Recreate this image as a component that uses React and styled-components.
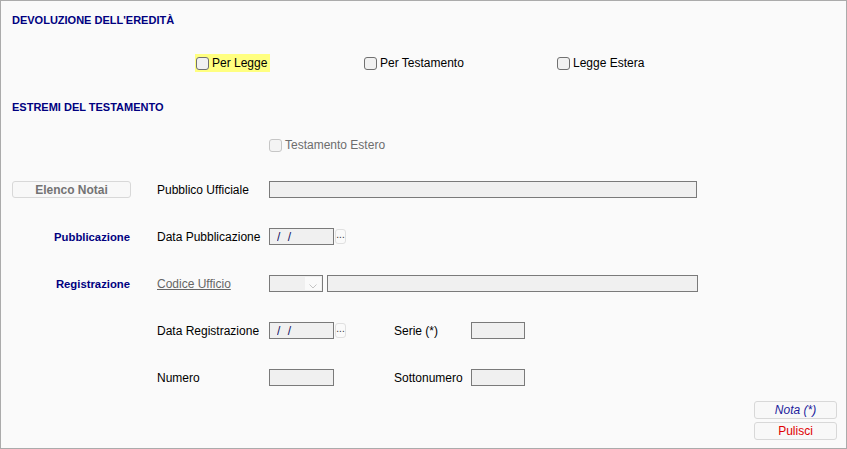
import React from 'react';
import styled, { createGlobalStyle } from 'styled-components';

const GlobalStyle = createGlobalStyle`
  html, body {
    margin: 0;
    padding: 0;
    background: #fafafa;
  }
  body {
    font-family: "Liberation Sans", Arial, sans-serif;
    font-size: 12px;
    color: #000;
  }
`;

const Panel = styled.div`
  width: 847px;
  height: 449px;
  box-sizing: border-box;
  border: 1px solid #ababab;
  background: #fafafa;
  display: flex;
  flex-direction: column;
`;

const SectionTitle = styled.div`
  height: ${(p) => p.$h}px;
  display: flex;
  align-items: center;
  padding-left: 11px;
  font-size: 11px;
  font-weight: bold;
  color: #000080;
`;

const CheckRow = styled.div`
  height: ${(p) => p.$h}px;
  display: flex;
  align-items: center;
  padding-left: ${(p) => p.$left}px;
`;

const CheckCell = styled.div`
  width: ${(p) => (p.$w ? `${p.$w}px` : 'auto')};
  display: flex;
  align-items: center;
`;

const CheckLabel = styled.label`
  display: inline-flex;
  align-items: center;
  gap: 3px;
  height: 18px;
  padding: 0 3px 0 1px;
  background: ${(p) => (p.$highlight ? '#ffff80' : 'transparent')};
  color: ${(p) => (p.$disabled ? '#6d6d6d' : '#000')};
  font-size: 12px;
`;

const Box = styled.input.attrs({ type: 'checkbox' })`
  appearance: none;
  margin: 0;
  width: 13px;
  height: 13px;
  box-sizing: border-box;
  border: 1px solid ${(p) => (p.disabled ? '#c6c6c6' : '#707070')};
  border-radius: 3px;
  background: ${(p) => (p.disabled ? '#f4f4f4' : '#f1f1f1')};
`;

const Form = styled.div`
  display: grid;
  grid-template-columns: 145px 112px 125px 77px 1fr;
  grid-auto-rows: 47px;
  align-items: center;
  padding: 2px 0 0 11px;
`;

const SideTitle = styled.div`
  grid-column: 1;
  padding-right: 27px;
  text-align: right;
  font-size: 11.3px;
  font-weight: bold;
  color: #000080;
`;

const SoftButton = styled.button`
  width: ${(p) => p.$w}px;
  height: ${(p) => p.$h}px;
  box-sizing: border-box;
  margin: 0;
  padding: 0;
  border: 1px solid #d8d8d8;
  border-radius: 3px;
  background: #f8f8f8;
  font-family: "Liberation Sans", Arial, sans-serif;
  font-size: ${(p) => p.$size || 12}px;
  font-weight: ${(p) => (p.$bold ? 'bold' : 'normal')};
  font-style: ${(p) => (p.$italic ? 'italic' : 'normal')};
  color: ${(p) => p.$color || '#737373'};
  line-height: 1;
`;

const Label = styled.div`
  grid-column: ${(p) => p.$col};
  font-size: 12px;
  color: #000;
`;

const LinkLabel = styled.a`
  grid-column: 2;
  justify-self: start;
  font-size: 12px;
  color: #666;
  text-decoration: underline;
`;

const Field = styled.div`
  grid-column: ${(p) => p.$col};
  display: flex;
  align-items: center;
  gap: ${(p) => p.$gap || 0}px;
`;

const TextInput = styled.input`
  width: ${(p) => p.$w}px;
  height: 17px;
  box-sizing: border-box;
  margin: 0;
  padding: 0 0 0 ${(p) => p.$pad || 2}px;
  border: 1px solid #7a7a7a;
  background: #f0f0f0;
  font-family: "Liberation Sans", Arial, sans-serif;
  font-size: 12px;
  letter-spacing: ${(p) => p.$spacing || 0}px;
  color: #101060;
  outline: none;
`;

const DotsButton = styled.button`
  width: 11px;
  height: 15px;
  box-sizing: border-box;
  margin: 0 0 0 1px;
  padding: 0 0 3px;
  border: 1px solid #e0e0e0;
  border-radius: 3px;
  background: #fafafa;
  font-family: "Liberation Sans", Arial, sans-serif;
  font-size: 10px;
  line-height: 1;
  display: flex;
  align-items: flex-end;
  justify-content: center;
  color: #333;
`;

const SelectBox = styled.div`
  width: 54px;
  height: 17px;
  box-sizing: border-box;
  border: 1px solid #7a7a7a;
  background: #f0f0f0;
  display: flex;
  align-items: center;
  justify-content: flex-end;
  padding-right: 1px;
`;

const ArrowBox = styled.div`
  width: 16px;
  height: 13px;
  background: #fafafa;
  display: flex;
  align-items: flex-end;
  justify-content: center;
`;

const Actions = styled.div`
  display: flex;
  flex-direction: column;
  align-items: flex-end;
  gap: 3px;
  padding-right: 9px;
`;

const DateField = ({ col }) => (
  <Field $col={col}>
    <TextInput $w={65} $pad={7} $spacing={2} value="/ /" readOnly />
    <DotsButton>...</DotsButton>
  </Field>
);

const App = () => (
  <>
    <GlobalStyle />
    <Panel>
      <SectionTitle $h={37}>DEVOLUZIONE DELL'EREDITÀ</SectionTitle>
      <CheckRow $h={50} $left={194}>
        <CheckCell $w={168}>
          <CheckLabel $highlight>
            <Box />
            Per Legge
          </CheckLabel>
        </CheckCell>
        <CheckCell $w={193}>
          <CheckLabel>
            <Box />
            Per Testamento
          </CheckLabel>
        </CheckCell>
        <CheckCell>
          <CheckLabel>
            <Box />
            Legge Estera
          </CheckLabel>
        </CheckCell>
      </CheckRow>

      <SectionTitle $h={38}>ESTREMI DEL TESTAMENTO</SectionTitle>
      <CheckRow $h={38} $left={267}>
        <CheckLabel $disabled>
          <Box disabled />
          Testamento Estero
        </CheckLabel>
      </CheckRow>

      <Form>
        <Field $col={1}>
          <SoftButton $w={119} $h={17} $bold $size={12}>
            Elenco Notai
          </SoftButton>
        </Field>
        <Label $col={2}>Pubblico Ufficiale</Label>
        <Field $col="3 / 6">
          <TextInput $w={428} readOnly />
        </Field>

        <SideTitle>Pubblicazione</SideTitle>
        <Label $col={2}>Data Pubblicazione</Label>
        <DateField col={3} />

        <SideTitle>Registrazione</SideTitle>
        <LinkLabel>Codice Ufficio</LinkLabel>
        <Field $col="3 / 6" $gap={4}>
          <SelectBox>
            <ArrowBox>
              <svg width="10" height="8" viewBox="0 0 10 8">
                <path d="M1.5 2.5 L5 6 L8.5 2.5" fill="none" stroke="#c4c4c4" strokeWidth="1" />
              </svg>
            </ArrowBox>
          </SelectBox>
          <TextInput $w={371} readOnly />
        </Field>

        <Label $col={2}>Data Registrazione</Label>
        <DateField col={3} />
        <Label $col={4}>Serie (*)</Label>
        <Field $col={5}>
          <TextInput $w={54} readOnly />
        </Field>

        <Label $col={2}>Numero</Label>
        <Field $col={3}>
          <TextInput $w={65} readOnly />
        </Field>
        <Label $col={4}>Sottonumero</Label>
        <Field $col={5}>
          <TextInput $w={54} readOnly />
        </Field>
      </Form>

      <Actions>
        <SoftButton $w={83} $h={18} $italic $color="#1c1c9c" $size={12}>
          Nota (*)
        </SoftButton>
        <SoftButton $w={83} $h={18} $color="#e00000" $size={12}>
          Pulisci
        </SoftButton>
      </Actions>
    </Panel>
  </>
);

export default App;
